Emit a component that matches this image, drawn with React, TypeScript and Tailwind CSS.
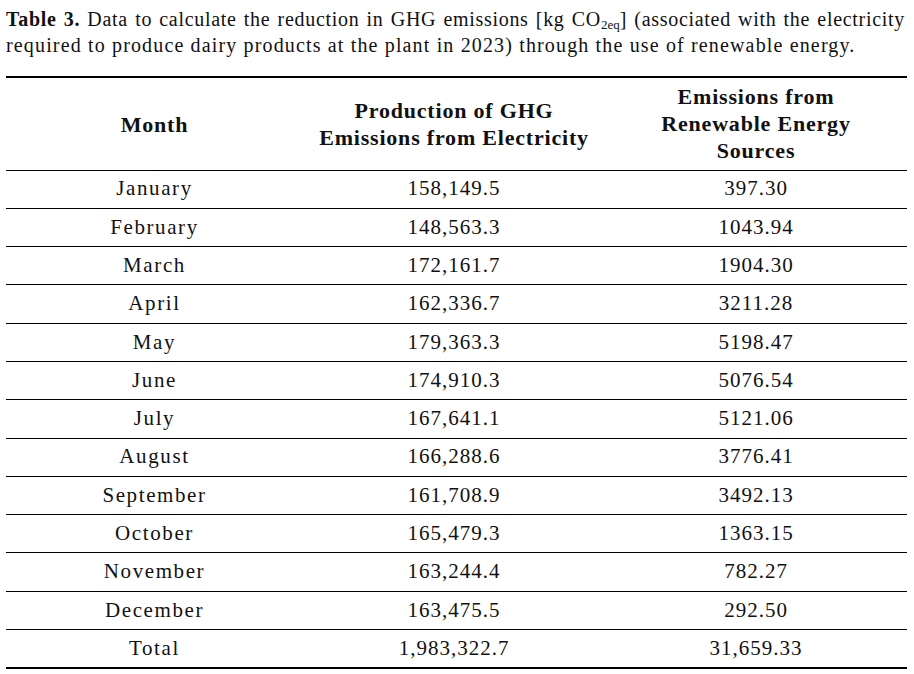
const rows: [string, string, string][] = [
  ["January", "158,149.5", "397.30"],
  ["February", "148,563.3", "1043.94"],
  ["March", "172,161.7", "1904.30"],
  ["April", "162,336.7", "3211.28"],
  ["May", "179,363.3", "5198.47"],
  ["June", "174,910.3", "5076.54"],
  ["July", "167,641.1", "5121.06"],
  ["August", "166,288.6", "3776.41"],
  ["September", "161,708.9", "3492.13"],
  ["October", "165,479.3", "1363.15"],
  ["November", "163,244.4", "782.27"],
  ["December", "163,475.5", "292.50"],
  ["Total", "1,983,322.7", "31,659.33"],
];

export default function App() {
  return (
    <div className="h-[674px] w-[914px] bg-white pl-[6px] pt-[6px] text-[#111] [font-family:'Liberation_Serif',serif]">
      <div className="w-[899px] text-[20px] leading-[26px]">
        <p className="whitespace-nowrap text-justify tracking-[0.7px] [text-align-last:justify]">
          <span className="font-bold">Table 3.</span> Data to calculate the reduction in GHG emissions [kg CO
          <sub className="text-[13px] tracking-normal">2eq</sub>] (associated with the electricity
        </p>
        <p className="whitespace-nowrap tracking-[1.15px]">
          required to produce dairy products at the plant in 2023) through the use of renewable energy.
        </p>
      </div>
      <table className="mt-[18px] w-[901px] border-collapse border-t-2 border-b-2 border-black text-center">
        <thead>
          <tr className="h-[93px] border-b border-black text-[22px] leading-[27px] font-bold tracking-[0.8px]">
            <th className="w-[297px] pt-[1px]">Month</th>
            <th className="w-[302px]">
              Production of GHG
              <br />
              Emissions from Electricity
            </th>
            <th>
              Emissions from
              <br />
              Renewable Energy
              <br />
              Sources
            </th>
          </tr>
        </thead>
        <tbody className="text-[21px] tracking-[1px]">
          {rows.map((r, i) => (
            <tr key={r[0]} className={i < rows.length - 1 ? "h-[38.3px] border-b border-black" : "h-[38.3px]"}>
              <td className="tracking-[1.6px]">{r[0]}</td>
              <td>{r[1]}</td>
              <td>{r[2]}</td>
            </tr>
          ))}
        </tbody>
      </table>
    </div>
  );
}
